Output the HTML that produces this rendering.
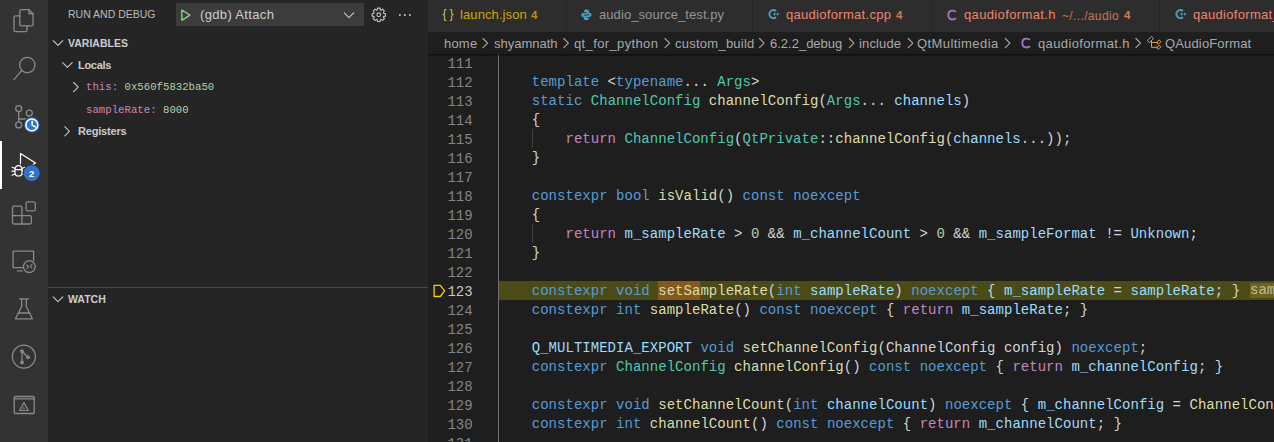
<!DOCTYPE html>
<html><head><meta charset="utf-8">
<style>
*{margin:0;padding:0;box-sizing:border-box}
html,body{width:1274px;height:442px;overflow:hidden;background:#1e1e1e;font-family:"Liberation Sans",sans-serif}
.abs{position:absolute}
#act{position:absolute;left:0;top:0;width:48px;height:442px;background:#333333}
#side{position:absolute;left:48px;top:0;width:380px;height:442px;background:#252526}
#tabs{position:absolute;left:428px;top:0;width:846px;height:32px;background:#252526;overflow:hidden}
.tab{position:absolute;top:0;height:32px;background:#2d2d2d;white-space:nowrap;font-size:13px}
.tab span{position:absolute;top:8px;line-height:16px}
.sep{position:absolute;top:0;width:1px;height:32px;background:#252526}
#bc{position:absolute;left:428px;top:32px;width:846px;height:22px;background:#1e1e1e;color:#a9a9a9;font-size:13px;white-space:nowrap;overflow:hidden}
#bc span{position:absolute;top:3.5px;line-height:16px}
#ed{position:absolute;left:428px;top:54px;width:846px;height:388px;background:#1e1e1e;overflow:hidden}
.ln{position:absolute;left:0;width:44.6px;text-align:right;font-family:"Liberation Mono",monospace;font-size:14px;line-height:19px;color:#858585}
.cl{position:absolute;left:70px;font-family:"Liberation Mono",monospace;font-size:14px;line-height:19px;color:#d4d4d4;white-space:pre;letter-spacing:0.03px}
.k{color:#569cd6}.r{color:#c586c0}.t{color:#4ec9b0}.f{color:#dcdcaa}.v{color:#9cdcfe}.n{color:#b5cea8}
.iv{color:#c8b990;background:#6b6420}
.ln.act{color:#c6c6c6}
.sh{position:absolute;left:0;top:0;width:846px;height:3px;background:linear-gradient(#00000090,#00000000)}
.ui{font-family:"Liberation Sans",sans-serif}
.mono{font-family:"Liberation Mono",monospace}
</style></head><body>
<div id="act">
<svg class="abs" style="left:0;top:0" width="48" height="442" viewBox="0 0 48 442" fill="none" stroke="#8a8a8a" stroke-width="1.3" stroke-linecap="round" stroke-linejoin="round">
  <!-- files -->
  <path d="M19.8 15.8H15.5Q14 15.8 14 17.3V30.2Q14 31.7 15.5 31.7H25.5Q27 31.7 27 30.2V26"/>
  <path d="M21.3 9.7H29L33 13.7V24.4Q33 25.9 31.5 25.9H21.3Q19.8 25.9 19.8 24.4V11.2Q19.8 9.7 21.3 9.7Z"/>
  <path d="M29 9.7V13.7H33"/>
  <!-- search -->
  <circle cx="27.3" cy="65.1" r="7.7"/>
  <path d="M21.9 70.4L13.9 79.6"/>
  <!-- scm -->
  <circle cx="18.7" cy="108.6" r="3"/>
  <circle cx="18.7" cy="124.9" r="3"/>
  <circle cx="29.3" cy="113.1" r="3"/>
  <path d="M18.7 111.6V121.9"/>
  <path d="M29.3 116.1Q29.3 119 26 119H18.7"/>
  <circle cx="31.85" cy="124.9" r="8.6" fill="#333333" stroke="none"/>
  <circle cx="31.85" cy="124.9" r="7.6" fill="#2f74c9" stroke="none"/>
  <circle cx="31.85" cy="124.9" r="5.9" stroke="#ffffff" stroke-width="1.5"/>
  <path d="M32.2 121.4V125.1L35.3 126.9" stroke="#ffffff" stroke-width="1.6"/>
  <!-- debug (active) -->
  <g stroke="#ffffff" stroke-width="1.2">
    <path d="M20.5 163.8V153.6L35.5 163.1L33 164.6"/>
    <path d="M15 169.6Q15.2 165.6 18.5 165.6Q21.8 165.6 22 169.6"/>
    <path d="M15 169.6V172.4Q15 176 18.5 176Q22 176 22 172.4V169.6Z"/>
    <path d="M12.2 167.2L14.6 168.3M11.9 171.2H14.6M12.2 175.2L14.6 174M24.8 167.2L22.4 168.3M25.1 171.2H22.4M24.8 175.2L22.4 174"/>
  </g>
  <circle cx="31.7" cy="173.2" r="9" fill="#333333" stroke="none"/>
  <circle cx="31.7" cy="173.2" r="8" fill="#2f74c9" stroke="none"/>
  <text x="31.7" y="176.6" text-anchor="middle" font-family="Liberation Sans" font-weight="bold" font-size="9.5" fill="#ffffff" stroke="none">2</text>
  <!-- extensions -->
  <path d="M14 206.1H20.4Q21.9 206.1 21.9 207.6V224H14Q12.5 224 12.5 222.5V207.6Q12.5 206.1 14 206.1Z"/>
  <path d="M12.5 215.6H29.9Q31.4 215.6 31.4 217.1V222.5Q31.4 224 29.9 224H21.9"/>
  <rect x="26.1" y="201.8" width="9.2" height="9" rx="1.5"/>
  <!-- remote -->
  <path d="M22.8 267.6H13.1V251.2H33.6V260.6"/>
  <path d="M17.5 270.9H22.4"/>
  <circle cx="29.3" cy="266.6" r="5.9"/>
  <path d="M26.8 265L28.6 266.8L26.8 268.6M32 264.4L30.2 266.2L32 268" stroke-width="1.1"/>
  <!-- flask -->
  <path d="M19.6 298.9H28.7M21.7 298.9V306.5L15.4 318.8H32.4L26.3 306.5V298.9"/>
  <path d="M18.3 313H29.6"/>
  <!-- git graph -->
  <circle cx="23.9" cy="356.6" r="11.5"/>
  <path d="M22 351.2V362.6M22 351.2L28 357.2" stroke-width="1.3"/>
  <circle cx="22" cy="351.2" r="2" fill="#858585" stroke="none"/>
  <circle cx="22" cy="362.6" r="2" fill="#858585" stroke="none"/>
  <circle cx="28" cy="357.2" r="2" fill="#858585" stroke="none"/>
  <!-- last: window -->
  <rect x="14.2" y="396.5" width="20" height="17" rx="1" stroke-width="1.3"/>
  <path d="M14.2 398.9H34.2" stroke-width="1.2"/>
  <path d="M23.9 402.6L19.6 410.5H28.3Z" stroke-width="1.2"/><path d="M23.6 406.2L21.9 409.6H25.6Z" fill="#8a8a8a" stroke="none" opacity=".6"/>
</svg>
  <div class="abs" style="left:0;top:141px;width:2px;height:48px;background:#ffffff"></div>
</div>
<div id="side">
  <div class="abs" style="left:20px;top:7px;font-size:10.5px;line-height:14px;color:#bbbbbb">RUN AND DEBUG</div>
  <div class="abs" style="left:128px;top:3px;width:188px;height:23px;background:#3c3c3c"></div>
  <svg class="abs" style="left:128px;top:3px" width="188" height="23" fill="none" stroke-linejoin="round" stroke-linecap="round">
    <path d="M5.9 7V17.3L13.9 12.15Z" stroke="#89d185" stroke-width="1.4"/>
    <path d="M168.3 9.9L173 14.6L177.7 9.9" stroke="#c5c5c5" stroke-width="1.1"/>
  </svg>
  <div class="abs" style="left:152px;top:6px;font-size:13px;line-height:17px;color:#cccccc;letter-spacing:0.35px">(gdb) Attach</div>
  <svg class="abs" style="left:320px;top:6px" width="60" height="18" fill="none" stroke="#c5c5c5" stroke-width="1.1">
    <circle cx="10.8" cy="8.8" r="1.9"/>
    <path d="M15.65 7.22 L17.47 7.47 L17.47 10.13 L15.65 10.38 L15.34 11.12 L16.45 12.58 L14.58 14.45 L13.12 13.34 L12.38 13.65 L12.13 15.47 L9.47 15.47 L9.22 13.65 L8.48 13.34 L7.02 14.45 L5.15 12.58 L6.26 11.12 L5.95 10.38 L4.13 10.13 L4.13 7.47 L5.95 7.22 L6.26 6.48 L5.15 5.02 L7.02 3.15 L8.48 4.26 L9.22 3.95 L9.47 2.13 L12.13 2.13 L12.38 3.95 L13.12 4.26 L14.58 3.15 L16.45 5.02 L15.34 6.48Z" stroke-linejoin="round"/>
    <circle cx="31.9" cy="8.9" r="1" fill="#c5c5c5" stroke="none"/>
    <circle cx="36.9" cy="8.9" r="1" fill="#c5c5c5" stroke="none"/>
    <circle cx="41.9" cy="8.9" r="1" fill="#c5c5c5" stroke="none"/>
  </svg>
  <svg class="abs" style="left:0;top:30px" width="380" height="290" fill="none" stroke="#c5c5c5" stroke-width="1.1" stroke-linejoin="round" stroke-linecap="round">
    <path d="M5.2 10.6L10 15.4L14.8 10.6"/>
    <path d="M14.6 32.6L19.4 37.4L24.2 32.6"/>
    <path d="M25.6 52.5L30.2 57.1L25.6 61.7"/>
    <path d="M16.8 96.7L21.4 101.3L16.8 105.9"/>
    <path d="M5.2 266.9L10 271.7L14.8 266.9"/>
  </svg>
  <div class="abs" style="left:20px;top:36px;font-size:10.5px;line-height:14px;font-weight:bold;color:#cccccc">VARIABLES</div>
  <div class="abs" style="left:30px;top:58px;font-size:11px;line-height:14px;font-weight:bold;color:#cccccc;letter-spacing:-0.3px">Locals</div>
  <div class="abs mono" style="left:38px;top:80px;font-size:10.7px;line-height:14px;color:#c586c0">this: <span style="color:#b5cea8">0x560f5832ba50</span></div>
  <div class="abs mono" style="left:38px;top:102.5px;font-size:10.7px;line-height:14px;color:#c586c0">sampleRate: <span style="color:#b5cea8">8000</span></div>
  <div class="abs" style="left:30px;top:124px;font-size:11px;line-height:14px;font-weight:bold;color:#cccccc;letter-spacing:-0.19px">Registers</div>
  <div class="abs" style="left:0;top:287px;width:380px;height:1px;background:#464647"></div>
  <div class="abs" style="left:20px;top:292px;font-size:10.5px;line-height:14px;font-weight:bold;color:#cccccc">WATCH</div>
</div>
<div id="tabs">
  <div class="tab" style="left:0;width:846px"></div>
  <div class="sep" style="left:138px"></div>
  <div class="sep" style="left:324px"></div>
  <div class="sep" style="left:503px"></div>
  <div class="sep" style="left:731px"></div>
  <span class="abs" style="left:14.5px;top:6px;font-size:12px;line-height:16px;color:#cbcb41">{&#8197;}</span>
  <span class="abs" style="left:32px;top:7.2px;font-size:13px;line-height:16px;color:#cca700;letter-spacing:0.1px">launch.json</span>
  <span class="abs" style="left:103px;top:7.1px;font-size:11.5px;font-weight:bold;line-height:16px;color:#cca700;opacity:.85">4</span>
  <svg class="abs" style="left:153px;top:8.6px" width="11" height="11.9" viewBox="0 0 12 13">
    <path d="M5.6 0.6C3.4 0.6 3.4 1.6 3.4 2.4V3.6H6V4.3H2.2C1 4.3 0.4 5.3 0.4 6.6C0.4 8 1 8.9 2.2 8.9H3V7.6C3 6.6 3.8 5.9 4.8 5.9H7.4C8.2 5.9 8.8 5.3 8.8 4.5V2.4C8.8 1.4 7.8 0.6 5.6 0.6Z" fill="#519aba"/>
    <path d="M6.2 12.4C8.4 12.4 8.4 11.4 8.4 10.6V9.4H5.8V8.7H9.6C10.8 8.7 11.4 7.7 11.4 6.4C11.4 5 10.8 4.1 9.6 4.1H8.8V5.4C8.8 6.4 8 7.1 7 7.1H4.4C3.6 7.1 3 7.7 3 8.5V10.6C3 11.6 4 12.4 6.2 12.4Z" fill="#519aba"/>
  </svg>
  <span class="abs" style="left:171px;top:7.2px;font-size:13px;line-height:16px;color:#969696;letter-spacing:0.08px">audio_source_test.py</span>
  <svg class="abs" style="left:340px;top:8px" width="14" height="12" viewBox="0 0 14 12" fill="none">
    <path d="M8 3.04A4 4 0 1 0 8 9.16" stroke="#519aba" stroke-width="2.1"/>
    <path d="M5.1 6.1H7.9M6.5 4.7V7.5M8.3 6.1H11.1M9.7 4.7V7.5" stroke="#519aba" stroke-width="1"/>
  </svg>
  <span class="abs" style="left:358px;top:7.2px;font-size:13px;line-height:16px;color:#ef846d;letter-spacing:0.3px">qaudioformat.cpp</span>
  <span class="abs" style="left:468px;top:7.1px;font-size:11.5px;font-weight:bold;line-height:16px;color:#ef846d;opacity:.85">4</span>
  <svg class="abs" style="left:519px;top:8.5px" width="12" height="13"><path d="M8.9 2.9Q7.9 1.6 5.4 1.6Q1.3 1.6 1.3 6.1Q1.3 10.5 5.4 10.5Q7.9 10.5 8.9 9.2" stroke="#a074c4" stroke-width="1.9" fill="none"/></svg>
  <span class="abs" style="left:536px;top:7.2px;font-size:13px;line-height:16px;color:#ef846d;letter-spacing:0.36px">qaudioformat.h</span>
  <span class="abs" style="left:634px;top:8.2px;font-size:12px;line-height:16px;color:#ef846d;opacity:.8;letter-spacing:0.36px">~/.../audio</span>
  <span class="abs" style="left:696px;top:7.1px;font-size:11.5px;font-weight:bold;line-height:16px;color:#ef846d;opacity:.85">4</span>
  <svg class="abs" style="left:747px;top:8px" width="14" height="12" viewBox="0 0 14 12" fill="none">
    <path d="M8 3.04A4 4 0 1 0 8 9.16" stroke="#519aba" stroke-width="2.1"/>
    <path d="M5.1 6.1H7.9M6.5 4.7V7.5M8.3 6.1H11.1M9.7 4.7V7.5" stroke="#519aba" stroke-width="1"/>
  </svg>
  <span class="abs" style="left:765px;top:7.2px;font-size:13px;line-height:16px;color:#ef846d;letter-spacing:0.3px">qaudioformat_p.h</span>
</div>
<div id="bc">
  <span style="left:16px;letter-spacing:0.2px">home</span>
  <span style="left:66px">shyamnath</span>
  <span style="left:146px;letter-spacing:0.37px">qt_for_python</span>
  <span style="left:247px;letter-spacing:0.25px">custom_build</span>
  <span style="left:342px">6.2.2_debug</span>
  <span style="left:431px;letter-spacing:0.13px">include</span>
  <span style="left:489px;letter-spacing:0.42px">QtMultimedia</span>
  <svg class="abs" style="left:593px;top:4.9px;position:absolute" width="12" height="13"><path d="M8.9 2.9Q7.9 1.6 5.4 1.6Q1.3 1.6 1.3 6.1Q1.3 10.5 5.4 10.5Q7.9 10.5 8.9 9.2" stroke="#a074c4" stroke-width="1.9" fill="none"/></svg>
  <span style="left:610px;letter-spacing:0.37px">qaudioformat.h</span>
  <span style="left:737px;letter-spacing:0.15px">QAudioFormat</span>
  <svg class="abs" style="left:0;top:0" width="846" height="22" fill="none" stroke="#a9a9a9" stroke-width="1.1" stroke-linejoin="round" stroke-linecap="round">
    <path d="M55 6.5L59.6 11.1L55 15.7"/>
    <path d="M135.8 6.5L140.4 11.1L135.8 15.7"/>
    <path d="M237 6.5L241.6 11.1L237 15.7"/>
    <path d="M331.5 6.5L336.1 11.1L331.5 15.7"/>
    <path d="M421.3 6.5L425.9 11.1L421.3 15.7"/>
    <path d="M480.2 6.5L484.8 11.1L480.2 15.7"/>
    <path d="M577.3 6.5L581.9 11.1L577.3 15.7"/>
    <path d="M707.9 6.5L712.5 11.1L707.9 15.7"/>
    <g stroke="#ee9d28" stroke-width="1" fill="none" stroke-linejoin="round"><path d="M719.60 8.30 L723.50 4.40 L725.60 6.50 L721.70 10.30Z"/><path d="M728.90 10.30 L731.20 8.00 L732.90 9.70 L730.60 12.00Z"/><path d="M728.90 15.40 L731.20 13.10 L732.90 14.80 L730.60 17.10Z"/><path d="M723.50 9.20 V15.30 H729.30 M723.50 10.40 H729.30"/></g>
  </svg>
</div>
<div id="ed">
<div class="ln" style="top:1px">111</div>
<div class="cl" style="top:0px"></div>
<div class="ln" style="top:20px">112</div>
<div class="cl" style="top:19px">    <span class="k">template</span> &lt;<span class="k">typename</span>... <span class="t">Args</span>&gt;</div>
<div class="ln" style="top:39px">113</div>
<div class="cl" style="top:38px">    <span class="k">static</span> <span class="t">ChannelConfig</span> <span class="f">channelConfig</span>(<span class="t">Args</span>... <span class="v">channels</span>)</div>
<div class="ln" style="top:58px">114</div>
<div class="cl" style="top:57px">    {</div>
<div class="ln" style="top:77px">115</div>
<div class="cl" style="top:76px">        <span class="r">return</span> <span class="t">ChannelConfig</span>(<span class="t">QtPrivate</span>::<span class="f">channelConfig</span>(<span class="v">channels</span>...));</div>
<div class="ln" style="top:96px">116</div>
<div class="cl" style="top:95px">    }</div>
<div class="ln" style="top:115px">117</div>
<div class="cl" style="top:114px"></div>
<div class="ln" style="top:134px">118</div>
<div class="cl" style="top:133px">    <span class="k">constexpr</span> <span class="k">bool</span> <span class="f">isValid</span>() <span class="k">const</span> <span class="k">noexcept</span></div>
<div class="ln" style="top:153px">119</div>
<div class="cl" style="top:152px">    {</div>
<div class="ln" style="top:172px">120</div>
<div class="cl" style="top:171px">        <span class="r">return</span> <span class="v">m_sampleRate</span> &gt; <span class="n">0</span> &amp;&amp; <span class="v">m_channelCount</span> &gt; <span class="n">0</span> &amp;&amp; <span class="v">m_sampleFormat</span> != <span class="v">Unknown</span>;</div>
<div class="ln" style="top:191px">121</div>
<div class="cl" style="top:190px">    }</div>
<div class="ln" style="top:210px">122</div>
<div class="cl" style="top:209px"></div>
<div class="abs" style="left:70.0px;top:227px;width:776.0px;height:19px;background:#4b4b18"></div>
<div class="abs" style="left:229.6px;top:227px;width:42.0px;height:19px;background:#845a1c"></div>
<div class="ln act" style="top:229px">123</div>
<div class="cl iv" style="left:822px;top:228.5px;height:15.5px;line-height:15.5px;padding-top:0">sampleRate = 8000</div>
<div class="cl" style="top:228px">    <span class="k">constexpr</span> <span class="k">void</span> <span class="f">setSampleRate</span>(<span class="k">int</span> <span class="v">sampleRate</span>) <span class="k">noexcept</span> { <span class="v">m_sampleRate</span> = <span class="v">sampleRate</span>; }</div>
<div class="ln" style="top:248px">124</div>
<div class="cl" style="top:247px">    <span class="k">constexpr</span> <span class="k">int</span> <span class="f">sampleRate</span>() <span class="k">const</span> <span class="k">noexcept</span> { <span class="r">return</span> <span class="v">m_sampleRate</span>; }</div>
<div class="ln" style="top:267px">125</div>
<div class="cl" style="top:266px"></div>
<div class="ln" style="top:286px">126</div>
<div class="cl" style="top:285px">    <span class="v">Q_MULTIMEDIA_EXPORT</span> <span class="k">void</span> <span class="f">setChannelConfig</span>(ChannelConfig config) <span class="k">noexcept</span>;</div>
<div class="ln" style="top:305px">127</div>
<div class="cl" style="top:304px">    <span class="k">constexpr</span> <span class="t">ChannelConfig</span> <span class="f">channelConfig</span>() <span class="k">const</span> <span class="k">noexcept</span> { <span class="r">return</span> <span class="v">m_channelConfig</span>; }</div>
<div class="ln" style="top:324px">128</div>
<div class="cl" style="top:323px"></div>
<div class="ln" style="top:343px">129</div>
<div class="cl" style="top:342px">    <span class="k">constexpr</span> <span class="k">void</span> <span class="f">setChannelCount</span>(<span class="k">int</span> <span class="v">channelCount</span>) <span class="k">noexcept</span> { <span class="v">m_channelConfig</span> = <span class="f">ChannelConfig</span>(...</div>
<div class="ln" style="top:362px">130</div>
<div class="cl" style="top:361px">    <span class="k">constexpr</span> <span class="k">int</span> <span class="f">channelCount</span>() <span class="k">const</span> <span class="k">noexcept</span> { <span class="r">return</span> <span class="v">m_channelCount</span>; }</div>
<div class="ln" style="top:381px">131</div>
<div class="cl" style="top:380px"></div>
  <div class="abs" style="left:70px;top:0;width:1px;height:388px;background:#707070"></div>
  <div class="abs" style="left:104px;top:75px;width:1px;height:19px;background:#404040"></div>
  <div class="abs" style="left:104px;top:170px;width:1px;height:19px;background:#404040"></div>
  <svg class="abs" style="left:0.5px;top:226px" width="20" height="19" fill="none">
    <path d="M5.1 5.3H11.3L15.6 10.9L11.3 16.5H5.1Z" stroke="#ffcc00" stroke-width="1.3" stroke-linejoin="round"/>
  </svg>
  <div class="sh"></div>
</div>
</body></html>
